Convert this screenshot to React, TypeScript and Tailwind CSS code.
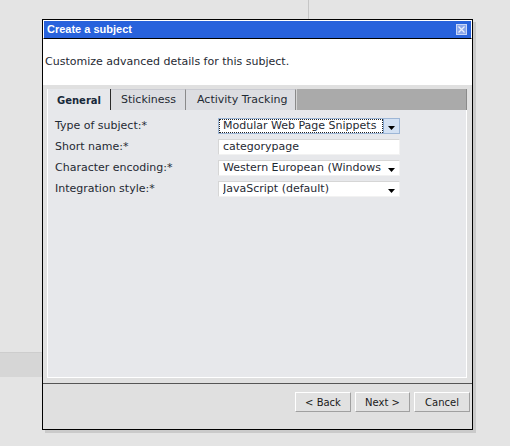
function Arrow() {
  return (
    <svg width="7" height="4" viewBox="0 0 7 4" className="shrink-0">
      <polygon points="0,0 7,0 3.5,4" fill="#000" />
    </svg>
  );
}

function CloseIcon() {
  return (
    <svg width="11" height="11" viewBox="0 0 11 11">
      <rect x="0.5" y="0.5" width="10" height="10" fill="#8aa6ea" stroke="#c9d6f6" />
      <path d="M2.5 2.5 L8.5 8.5 M8.5 2.5 L2.5 8.5" stroke="#e8eefc" strokeWidth="1.3" />
    </svg>
  );
}

function Field({ children, arrow }: { children: React.ReactNode; arrow?: boolean }) {
  return (
    <div className="flex h-[16px] items-center border border-[#d6d6d6] border-b-[#f2f2f2] border-r-[#f2f2f2] bg-white pl-[4px]">
      <span className="w-[160px] shrink-0 overflow-hidden whitespace-nowrap">{children}</span>
      {arrow && (
        <span className="ml-[5px] mt-[3px]">
          <Arrow />
        </span>
      )}
    </div>
  );
}

function Button({ label, w }: { label: string; w: string }) {
  return (
    <button
      className={`${w} flex h-[20px] items-center justify-center border border-t-white border-l-white border-b-[#a0a0a0] border-r-[#a0a0a0] bg-[#e1e1e1] text-[10px] text-[#1a1a1a]`}
    >
      {label}
    </button>
  );
}

function Dialog() {
  return (
    <div className="absolute left-[42px] top-[19px] flex h-[411px] w-[431px] flex-col border border-black bg-[#e0e0e0] shadow-[3px_3px_0_#cacaca]">
      {/* title bar */}
      <div className="border-x border-t border-b border-white border-b-black">
        <div className="flex h-[17px] items-center justify-between bg-[#2862dc] pl-[3px] pr-[4px]">
          <span className="font-['Liberation_Sans',sans-serif] text-[11px] font-bold text-white">Create a subject</span>
          <CloseIcon />
        </div>
      </div>

      <div className="flex h-[46px] items-center bg-white pl-[2px]">
        Customize advanced details for this subject.
      </div>

      {/* tabs + panel */}
      <div className="pt-[4px] pl-[4px] pr-[5px] pb-[5px]">
        <div className="flex h-[21px]">
          <div className="flex w-[64px] items-center border-l border-l-white border-r border-r-[#2a2a2a] bg-[#e7e8eb] pl-[9px] pt-px text-[10px] font-bold text-[#17293a]">
            General
          </div>
          <div className="flex w-[75px] items-center border-t border-t-[#cacbd2] border-r border-r-[#8a8a8a] bg-[#dcdde1] pl-[10px]">
            Stickiness
          </div>
          <div className="flex w-[110px] items-center border-t border-t-[#cacbd2] border-r border-r-[#8a8a8a] bg-[#dcdde1] pl-[11px]">
            Activity Tracking
          </div>
          <div className="flex-1 border-l border-l-[#d4d4d4] border-r border-r-[#8a8a8a] bg-[#aaaaaa]" />
        </div>

        <div className="h-[268px] border-x border-b border-white bg-[#e7e8eb] pt-[8px] pl-[7px]">
          <div className="grid grid-cols-[163px_182px] gap-y-[5px]">
            <div className="flex h-[16px] items-center">Type of subject:*</div>
            <div className="flex h-[16px] border border-[#9db6d6] bg-white">
              <div className="flex min-w-0 flex-1 items-center overflow-hidden whitespace-nowrap border border-dotted border-[#222] pl-[3px]">
                Modular Web Page Snippets
              </div>
              <div className="flex w-[16px] shrink-0 items-end justify-center border-l border-[#7fa3d0] bg-[#d3e1f3] pb-[3px]">
                <Arrow />
              </div>
            </div>

            <div className="flex h-[16px] items-center">Short name:*</div>
            <Field>categorypage</Field>

            <div className="flex h-[16px] items-center">Character encoding:*</div>
            <Field arrow>Western European (Windows</Field>

            <div className="flex h-[16px] items-center">Integration style:*</div>
            <Field arrow>JavaScript (default)</Field>
          </div>
        </div>
      </div>

      {/* footer */}
      <div className="flex flex-1 items-start justify-end gap-[4px] border-t border-[#555555] pt-[8px] pr-[2px]">
        <Button label="< Back" w="w-[56px]" />
        <Button label="Next >" w="w-[55px]" />
        <Button label="Cancel" w="w-[56px]" />
      </div>
    </div>
  );
}

export default function App() {
  return (
    <div className="relative h-[446px] w-[510px] overflow-hidden bg-[#e4e4e4] font-['DejaVu_Sans',sans-serif] text-[11px] text-[#1f2a33]">
      <div className="ml-[308px] h-[19px] w-px bg-[#c6c6c6]" />
      <div className="mt-[333px] h-px w-[42px] bg-[#cdcdcd]" />
      <div className="h-[24px] w-[42px] bg-[#d6d6d6]" />
      <Dialog />
    </div>
  );
}
